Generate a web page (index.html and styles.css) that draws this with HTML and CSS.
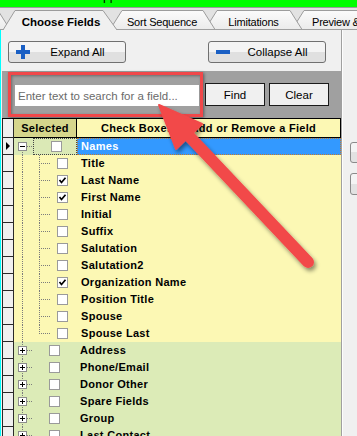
FILE: index.html
```html
<!DOCTYPE html>
<html lang="en">
<head>
    <meta charset="UTF-8">
    <title>Choose Fields</title>
    <link rel="stylesheet" href="styles.css">
</head>
<body>

    <div class="titlebar"><span>Applications</span></div>

    <div class="tabs">
        <svg class="tab-shapes" width="357" height="23" viewBox="0 0 357 23">
            <defs>
                <linearGradient id="tabfill" x1="0" y1="0" x2="0" y2="1">
                    <stop offset="0" stop-color="#fbfbfb"/>
                    <stop offset="1" stop-color="#ebebeb"/>
                </linearGradient>
            </defs>
            <rect x="0" y="0" width="357" height="23" fill="#e2e2e2"/>
            <line x1="0" y1="0.5" x2="357" y2="0.5" stroke="#9c9c9c"/>
            <polygon points="292,22.5 304,3.5 360,3.5 360,22.5" fill="url(#tabfill)" stroke="#9c9c9c"/>
            <polygon points="205,22.5 217,3.5 290,3.5 302,22.5" fill="url(#tabfill)" stroke="#9c9c9c"/>
            <polygon points="110,22.5 122,3.5 203,3.5 215,22.5" fill="url(#tabfill)" stroke="#9c9c9c"/>
            <polygon points="-60,22.5 -48,3.5 -2,3.5 10,22.5" fill="url(#tabfill)" stroke="#9c9c9c"/>
            <line x1="0" y1="22.5" x2="357" y2="22.5" stroke="#a0a0a0"/>
            <polygon points="3,23 15,3.5 103,3.5 117,23" fill="#f0f0f0"/>
            <polyline points="3,23 15,3.5 103,3.5 117,23" fill="none" stroke="#9c9c9c"/>
        </svg>
        <span class="tab tab-active">Choose Fields</span>
        <span class="tab tab-sort">Sort Sequence</span>
        <span class="tab tab-limit">Limitations</span>
        <span class="tab tab-preview">Preview &amp; Print</span>
    </div>

    <div class="main">
        <div class="panel">
            <div class="toolbar">
                <button class="btn">
                    <svg width="14" height="14" viewBox="0 0 14 14"><path d="M5 0h4v5h5v4H9v5H5V9H0V5h5z" fill="#1a5fc4"/></svg>
                    <span>Expand All</span>
                </button>
                <button class="btn btn-collapse">
                    <svg width="14" height="14" viewBox="0 0 14 14"><path d="M0 5h14v4H0z" fill="#1a5fc4"/></svg>
                    <span>Collapse All</span>
                </button>
            </div>

            <div class="searchband">
                <div class="highlight">
                    <input class="search" type="text" placeholder="Enter text to search for a field...">
                </div>
                <button class="flat">Find</button>
                <button class="flat flat-clear">Clear</button>
            </div>

            <div class="grid">
                <div class="row head">
                    <div class="rowsel"></div>
                    <div class="h-sel">Selected</div>
                    <div class="h-name">Check Boxes to Add or Remove a Field</div>
                </div>

                <div class="row names">
                    <div class="rowsel current"><i class="pointer"></i></div>
                    <div class="c-sel"><i class="toggle minus"></i><i class="branch short"></i><span class="focus"><i class="cb"></i></span></div>
                    <div class="c-name">Names</div>
                </div>
                <div class="row child">
                    <div class="rowsel"></div>
                    <div class="c-sel"><i class="branch"></i><i class="cb"></i></div>
                    <div class="c-name">Title</div>
                </div>
                <div class="row child">
                    <div class="rowsel"></div>
                    <div class="c-sel"><i class="branch"></i><i class="cb"><svg width="9" height="9" viewBox="0 0 9 9"><polyline points="1.5,4 3.5,6.5 7.5,1.8" fill="none" stroke="#000" stroke-width="1.7"/></svg></i></div>
                    <div class="c-name">Last Name</div>
                </div>
                <div class="row child">
                    <div class="rowsel"></div>
                    <div class="c-sel"><i class="branch"></i><i class="cb"><svg width="9" height="9" viewBox="0 0 9 9"><polyline points="1.5,4 3.5,6.5 7.5,1.8" fill="none" stroke="#000" stroke-width="1.7"/></svg></i></div>
                    <div class="c-name">First Name</div>
                </div>
                <div class="row child">
                    <div class="rowsel"></div>
                    <div class="c-sel"><i class="branch"></i><i class="cb"></i></div>
                    <div class="c-name">Initial</div>
                </div>
                <div class="row child">
                    <div class="rowsel"></div>
                    <div class="c-sel"><i class="branch"></i><i class="cb"></i></div>
                    <div class="c-name">Suffix</div>
                </div>
                <div class="row child">
                    <div class="rowsel"></div>
                    <div class="c-sel"><i class="branch"></i><i class="cb"></i></div>
                    <div class="c-name">Salutation</div>
                </div>
                <div class="row child">
                    <div class="rowsel"></div>
                    <div class="c-sel"><i class="branch"></i><i class="cb"></i></div>
                    <div class="c-name">Salutation2</div>
                </div>
                <div class="row child">
                    <div class="rowsel"></div>
                    <div class="c-sel"><i class="branch"></i><i class="cb"><svg width="9" height="9" viewBox="0 0 9 9"><polyline points="1.5,4 3.5,6.5 7.5,1.8" fill="none" stroke="#000" stroke-width="1.7"/></svg></i></div>
                    <div class="c-name">Organization Name</div>
                </div>
                <div class="row child">
                    <div class="rowsel"></div>
                    <div class="c-sel"><i class="branch"></i><i class="cb"></i></div>
                    <div class="c-name">Position Title</div>
                </div>
                <div class="row child">
                    <div class="rowsel"></div>
                    <div class="c-sel"><i class="branch"></i><i class="cb"></i></div>
                    <div class="c-name">Spouse</div>
                </div>
                <div class="row child last">
                    <div class="rowsel"></div>
                    <div class="c-sel"><i class="branch"></i><i class="cb"></i></div>
                    <div class="c-name">Spouse Last</div>
                </div>

                <div class="row group">
                    <div class="rowsel"></div>
                    <div class="c-sel"><i class="toggle plus"></i><i class="branch short"></i><i class="cb"></i></div>
                    <div class="c-name">Address</div>
                </div>
                <div class="row group">
                    <div class="rowsel"></div>
                    <div class="c-sel"><i class="toggle plus"></i><i class="branch short"></i><i class="cb"></i></div>
                    <div class="c-name">Phone/Email</div>
                </div>
                <div class="row group">
                    <div class="rowsel"></div>
                    <div class="c-sel"><i class="toggle plus"></i><i class="branch short"></i><i class="cb"></i></div>
                    <div class="c-name">Donor Other</div>
                </div>
                <div class="row group">
                    <div class="rowsel"></div>
                    <div class="c-sel"><i class="toggle plus"></i><i class="branch short"></i><i class="cb"></i></div>
                    <div class="c-name">Spare Fields</div>
                </div>
                <div class="row group">
                    <div class="rowsel"></div>
                    <div class="c-sel"><i class="toggle plus"></i><i class="branch short"></i><i class="cb"></i></div>
                    <div class="c-name">Group</div>
                </div>
                <div class="row group">
                    <div class="rowsel"></div>
                    <div class="c-sel"><i class="toggle plus"></i><i class="branch short"></i><i class="cb"></i></div>
                    <div class="c-name">Last Contact</div>
                </div>
            </div>
        </div>

        <div class="side">
            <button class="side-btn"></button>
            <button class="side-btn side-btn-2"></button>
        </div>
    </div>

    <!-- annotation drawn over the screenshot -->
    <svg class="arrow" width="357" height="436" viewBox="0 0 357 436">
        <defs>
            <filter id="shadow" x="-20%" y="-20%" width="140%" height="140%">
                <feDropShadow dx="2" dy="3" stdDeviation="2" flood-color="#000" flood-opacity="0.45"/>
            </filter>
        </defs>
        <g filter="url(#shadow)" fill="#f2484a" stroke="#f2484a">
            <line x1="188" y1="135" x2="308" y2="262" stroke-width="12" stroke-linecap="round"/>
            <polygon points="159,105 176,149 202,124" stroke-width="2" stroke-linejoin="round"/>
        </g>
    </svg>

</body>
</html>
```

FILE: styles.css
```css
body {
    margin: 0;
    width: 357px;
    height: 436px;
    overflow: hidden;
    position: relative;
    background-color: #f0f0f0;
    font-family: "Liberation Sans", Arial, sans-serif;
    font-size: 11px;
    color: #000;
}
button {
    font-family: inherit;
    font-size: 11px;
    color: #000;
    padding: 0;
}

/* barra verde do topo */
.titlebar {
    height: 7px;
    background-color: #00ff00;
    overflow: hidden;
}
.titlebar span {
    display: block;
    margin-top: -11px;
    padding-left: 95px;
    line-height: 15px;
    font-size: 12px;
}

/* abas */
.tabs {
    position: relative;
    height: 23px;
    display: flex;
    align-items: center;
    padding-top: 6px;
    box-sizing: border-box;
    font-size: 11px;
    letter-spacing: -0.2px;
    overflow: hidden;
}
.tab-shapes {
    position: absolute;
    top: 0;
    left: 0;
}
.tab {
    position: relative;
    text-align: center;
    white-space: nowrap;
    flex-shrink: 0;
}
.tab-active {
    margin-left: 8px;
    width: 106px;
    font-weight: bold;
    font-size: 11.5px;
    letter-spacing: 0;
}
.tab-sort {
    width: 96px;
}
.tab-limit {
    width: 87px;
}
.tab-preview {
    padding-left: 15px;
}

.main {
    display: flex;
    height: 406px;
}
.panel {
    width: 339px;
    border-left: 1px solid #00ffff;
    padding-left: 1px;
    border-right: 1px solid #a0a0a0;
    flex-shrink: 0;
}
.side {
    flex: 1;
    border-left: 1px solid #fdfdfd;
    padding-top: 112px;
    display: flex;
    flex-direction: column;
    gap: 10px;
}
.side-btn {
    margin-left: 7px;
    width: 20px;
    height: 21px;
    border: 1px solid #8a8a8a;
    border-radius: 3px;
    background: linear-gradient(#f4f4f4 50%, #e2e2e2 50%);
}
.side-btn-2 {
    height: 22px;
}

/* botoes expandir / recolher */
.toolbar {
    height: 41px;
    padding-top: 11px;
    box-sizing: border-box;
    display: flex;
}
.btn {
    display: flex;
    align-items: center;
    width: 118px;
    height: 22px;
    margin-left: 6px;
    padding-left: 7px;
    border: 1px solid #707070;
    border-radius: 3px;
    background: linear-gradient(#f4f4f4 50%, #e0e0e0 50%);
}
.btn span {
    flex: 1;
    text-align: center;
    font-size: 11.5px;
}
.btn-collapse {
    margin-left: 82px;
}

/* faixa de busca */
.searchband {
    height: 47px;
    background-color: #a0a0a0;
    display: flex;
    align-items: center;
}
.highlight {
    width: 195px;
    height: 45px;
    margin-left: 6px;
    box-sizing: border-box;
    border: 3px solid #f0484a;
    box-shadow: 1px 1px 3px rgba(0, 0, 0, 0.45), inset 1px 1px 3px rgba(0, 0, 0, 0.35);
    display: flex;
    align-items: center;
}
.search {
    width: 184px;
    height: 21px;
    margin-left: 4px;
    margin-top: 2px;
    box-sizing: border-box;
    border: none;
    padding: 0 0 0 3px;
    font-family: inherit;
    font-size: 11.5px;
    background: #fff;
    outline: none;
}
.search::placeholder {
    color: #6a6a6a;
}
.flat {
    width: 60px;
    height: 23px;
    margin-left: 2px;
    border: 1px solid #1a1a1a;
    background-color: #f0f0f0;
    font-size: 11.5px;
}
.flat-clear {
    margin-left: 4px;
}

/* grade de campos */
.grid {
    border-top: 1px solid #000;
    font-weight: bold;
    letter-spacing: 0.3px;
}
.row {
    display: grid;
    grid-template-columns: 12px 63px 1fr;
    height: 17px;
    line-height: 17px;
}
.rowsel {
    box-sizing: border-box;
    border-left: 1px solid #2a2a2a;
    border-right: 1px solid #2a2a2a;
    border-bottom: 1px solid #2a2a2a;
    background-color: #f0f0f0;
    display: flex;
    align-items: center;
}
.pointer {
    width: 0;
    height: 0;
    margin-left: 3px;
    border-top: 4px solid transparent;
    border-bottom: 4px solid transparent;
    border-left: 4px solid #000;
}
.row.head {
    height: 19px;
    line-height: 18px;
}
.h-sel {
    background-color: #d6d68c;
    border-right: 1px solid #000;
    border-bottom: 1px solid #000;
    text-align: center;
}
.h-name {
    background-color: #fcf8b4;
    border-right: 1px solid #000;
    border-bottom: 1px solid #000;
    text-align: center;
}

.c-sel {
    display: flex;
    align-items: center;
}
.c-name {
    padding-left: 4px;
    white-space: nowrap;
}

.names .c-sel {
    background:
        linear-gradient(#dbe9b6, #dbe9b6) 0 0 / 12px 9px no-repeat,
        linear-gradient(#7c7c7c 50%, transparent 50%) 8px 0 / 1px 2px repeat-y,
        #dbe9b6;
}
.names .c-name {
    background-color: #3399ff;
    color: #fff;
    border: 1px dotted #c07a30;
    padding-left: 3px;
    line-height: 15px;
}
.child .c-sel,
.child .c-name {
    background-color: #fcf8b4;
}
.child .c-sel {
    background:
        linear-gradient(#7c7c7c 50%, transparent 50%) 8px 0 / 1px 2px repeat-y,
        linear-gradient(#7c7c7c 50%, transparent 50%) 25px 0 / 1px 2px repeat-y,
        #fcf8b4;
}
.child.last .c-sel {
    background:
        linear-gradient(#fcf8b4, #fcf8b4) 20px 100% / 10px 8px no-repeat,
        linear-gradient(#7c7c7c 50%, transparent 50%) 8px 0 / 1px 2px repeat-y,
        linear-gradient(#7c7c7c 50%, transparent 50%) 25px 0 / 1px 2px repeat-y,
        #fcf8b4;
}
.group .c-sel,
.group .c-name {
    background-color: #dcebb7;
}
.group .c-sel {
    background:
        linear-gradient(#7c7c7c 50%, transparent 50%) 8px 0 / 1px 2px repeat-y,
        #dcebb7;
}
.group .c-name {
    padding-left: 3px;
}

.toggle {
    width: 9px;
    height: 9px;
    margin-left: 4px;
    box-sizing: border-box;
    border: 1px solid #8c8c8c;
    flex-shrink: 0;
}
.toggle.minus {
    background: linear-gradient(#000, #000) center / 5px 1px no-repeat, #fff;
}
.toggle.plus {
    background:
        linear-gradient(#000, #000) center / 5px 1px no-repeat,
        linear-gradient(#000, #000) center / 1px 5px no-repeat,
        #fff;
}
.branch {
    width: 11px;
    height: 1px;
    margin-left: 25px;
    background: linear-gradient(to right, #7c7c7c 50%, transparent 50%) 0 0 / 2px 1px repeat-x;
    flex-shrink: 0;
}
.branch.short {
    width: 6px;
    margin-left: 0;
}
.cb {
    width: 11px;
    height: 11px;
    margin-left: 7px;
    box-sizing: border-box;
    border: 1px solid #9a9a9a;
    background-color: #fff;
    display: flex;
    flex-shrink: 0;
}
.group .cb {
    margin-left: 16px;
}
.focus {
    flex: 1;
    align-self: stretch;
    border: 1px dotted #444;
    display: flex;
    align-items: center;
}
.focus .cb {
    margin-left: 17px;
}

.arrow {
    position: absolute;
    top: 0;
    left: 0;
    pointer-events: none;
}
```
